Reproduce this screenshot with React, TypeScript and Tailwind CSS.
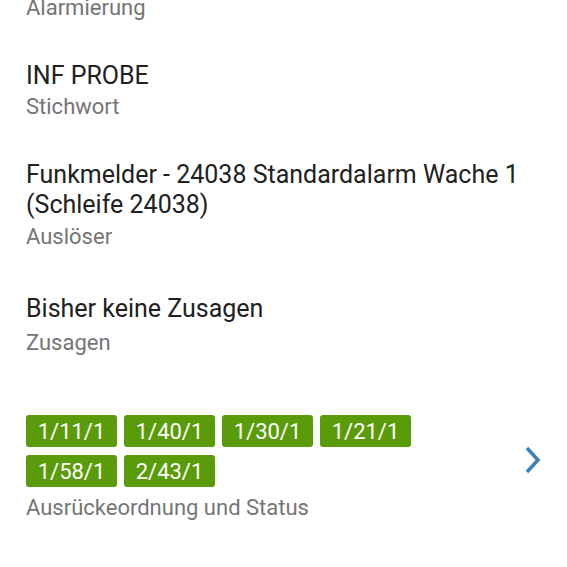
import React from "react";

const units = ["1/11/1", "1/40/1", "1/30/1", "1/21/1", "1/58/1", "2/43/1"];

function Title({ children, className = "" }: { children: React.ReactNode; className?: string }) {
  return <div className={`text-[25px] leading-[30px] text-[#212121] ${className}`}>{children}</div>;
}

function Label({ children, className = "" }: { children: React.ReactNode; className?: string }) {
  return <div className={`text-[22px] leading-[30px] text-[#757575] ${className}`}>{children}</div>;
}

export default function App() {
  return (
    <div
      className="h-[567px] w-[567px] overflow-hidden bg-white"
      style={{ fontFamily: "Roboto, 'Noto Sans', sans-serif" }}
    >
      <div className="-mt-[7px] flex flex-col pl-[26px] pr-[26px]">
        <Label>Alarmierung</Label>

        <Title className="mt-[38px]">INF PROBE</Title>
        <Label className="mt-[1px]">Stichwort</Label>

        <Title className="mt-[38px]">
          Funkmelder - 24038 Standardalarm Wache 1
          <br />
          (Schleife 24038)
        </Title>
        <Label className="mt-[2px]">Auslöser</Label>

        <Title className="mt-[42px]">Bisher keine Zusagen</Title>
        <Label className="mt-[4px]">Zusagen</Label>

        <div className="mt-[57px] flex items-center">
          <div className="flex flex-1 flex-col">
            <div className="flex w-[400px] flex-wrap gap-x-[7px] gap-y-[8px]">
              {units.map((u) => (
                <span
                  key={u}
                  className="flex h-[32px] w-[91px] items-center justify-center rounded-[3px] bg-[#5a9b0a] text-[22px] text-white"
                >
                  {u}
                </span>
              ))}
            </div>
            <Label className="mt-[6px]">Ausrückeordnung und Status</Label>
          </div>
          <svg width="22" height="28" viewBox="0 0 22 28" className="-mt-[18px]">
            <path d="M8 2 L19 14 L8 26" fill="none" stroke="#3d7fb3" strokeWidth="3.5" />
          </svg>
        </div>
      </div>
    </div>
  );
}
